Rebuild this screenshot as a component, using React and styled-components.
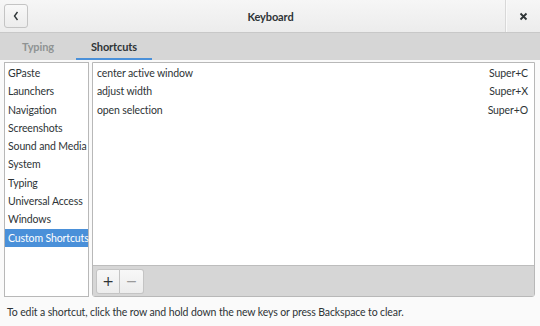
import React from 'react';
import styled, { createGlobalStyle } from 'styled-components';

const GlobalStyle = createGlobalStyle`
  html, body {
    margin: 0;
    padding: 0;
    background: #fafafa;
  }
  body {
    font-family: Lato, "Noto Sans", sans-serif;
    font-size: 10.5px;
    letter-spacing: -0.12px;
    color: #2e3436;
  }
`;

const Window = styled.div`
  width: 540px;
  height: 326px;
  display: flex;
  flex-direction: column;
  background: #fafafa;
  overflow: hidden;
`;

const HeaderBar = styled.div`
  height: 32px;
  display: flex;
  align-items: center;
  background: linear-gradient(#f6f6f6, #ececec);
  border-bottom: 1px solid #c8c8c8;
  padding-left: 4px;
`;

const BackButton = styled.button`
  width: 24px;
  height: 24px;
  padding: 0;
  display: flex;
  align-items: center;
  justify-content: center;
  border: 1px solid #c4c4c4;
  border-radius: 3px;
  background: linear-gradient(#f8f8f8, #ececec);
  color: #2e3436;
`;

const Title = styled.div`
  flex: 1;
  text-align: center;
  font-weight: bold;
  font-size: 11px;
  padding-left: 8px;
`;

const CloseArea = styled.div`
  width: 34px;
  height: 32px;
  display: flex;
  align-items: center;
  justify-content: center;
  border-left: 1px solid #d8d8d8;
  box-shadow: inset 1px 0 0 #fafafa;
`;

const TabBar = styled.div`
  height: 27px;
  display: flex;
  align-items: stretch;
  background: #d6d6d6;
`;

const Tab = styled.div`
  width: ${p => p.width}px;
  display: flex;
  align-items: center;
  justify-content: center;
  font-weight: bold;
  font-size: 11px;
  color: ${p => (p.active ? '#2e3436' : '#8f9393')};
  box-shadow: ${p => (p.active ? 'inset 0 -2px 0 #4a90d9' : 'none')};
`;

const Body = styled.div`
  display: flex;
  gap: 3px;
  padding: 2px 5px 0 4px;
  height: 235px;
`;

const Sidebar = styled.div`
  width: 83px;
  border: 1px solid #b8b8b8;
  background: #fff;
  padding-top: 1px;
`;

const SideItem = styled.div`
  height: 18.3px;
  line-height: 18.3px;
  padding-left: 3px;
  white-space: nowrap;
  background: ${p => (p.selected ? '#4a90d9' : 'transparent')};
  color: ${p => (p.selected ? '#fff' : '#2e3436')};
`;

const Panel = styled.div`
  flex: 1;
  display: flex;
  flex-direction: column;
  border: 1px solid #b8b8b8;
  border-radius: 0 0 3px 3px;
  background: #fff;
`;

const ShortcutList = styled.div`
  flex: 1;
  padding-top: 1px;
`;

const ShortcutRow = styled.div`
  height: 18.3px;
  display: flex;
  align-items: center;
  justify-content: space-between;
  padding: 0 6px 0 4px;
`;

const Toolbar = styled.div`
  height: 30px;
  display: flex;
  align-items: center;
  padding-left: 3px;
  background: #d6d6d6;
  border-top: 1px solid #bdbdbd;
`;

const ToolButton = styled.button`
  width: 24px;
  height: 25px;
  padding: 0;
  display: flex;
  align-items: center;
  justify-content: center;
  border: 1px solid #c4c4c4;
  border-radius: ${p => (p.first ? '3px 0 0 3px' : '0 3px 3px 0')};
  border-left-width: ${p => (p.first ? '1px' : '0')};
  background: linear-gradient(#f8f8f8, #ececec);
  font-family: "DejaVu Sans", sans-serif;
  font-size: 14px;
  color: ${p => (p.dim ? '#9a9a9a' : '#2e3436')};
`;

const Footer = styled.div`
  padding: 9px 0 0 7px;
  white-space: nowrap;
`;

const categories = [
  'GPaste',
  'Launchers',
  'Navigation',
  'Screenshots',
  'Sound and Media',
  'System',
  'Typing',
  'Universal Access',
  'Windows',
  'Custom Shortcuts'
];

const shortcuts = [
  ['center active window', 'Super+C'],
  ['adjust width', 'Super+X'],
  ['open selection', 'Super+O']
];

const App = () => (
  <Window>
    <GlobalStyle />
    <HeaderBar>
      <BackButton>
        <svg width="8" height="12" viewBox="0 0 8 12">
          <path d="M5.5 2 L2.5 6 L5.5 10" fill="none" stroke="#2e3436" strokeWidth="1.4" />
        </svg>
      </BackButton>
      <Title>Keyboard</Title>
      <CloseArea>
        <svg width="9" height="9" viewBox="0 0 9 9">
          <path d="M1.5 1.5 L7.5 7.5 M7.5 1.5 L1.5 7.5" stroke="#2e3436" strokeWidth="1.8" />
        </svg>
      </CloseArea>
    </HeaderBar>
    <TabBar>
      <Tab width={76}>Typing</Tab>
      <Tab width={76} active>Shortcuts</Tab>
    </TabBar>
    <Body>
      <Sidebar>
        {categories.map(c => (
          <SideItem key={c} selected={c === 'Custom Shortcuts'}>{c}</SideItem>
        ))}
      </Sidebar>
      <Panel>
        <ShortcutList>
          {shortcuts.map(([name, keys]) => (
            <ShortcutRow key={name}>
              <span>{name}</span>
              <span>{keys}</span>
            </ShortcutRow>
          ))}
        </ShortcutList>
        <Toolbar>
          <ToolButton first>+</ToolButton>
          <ToolButton dim>−</ToolButton>
        </Toolbar>
      </Panel>
    </Body>
    <Footer>To edit a shortcut, click the row and hold down the new keys or press Backspace to clear.</Footer>
  </Window>
);

export default App;
